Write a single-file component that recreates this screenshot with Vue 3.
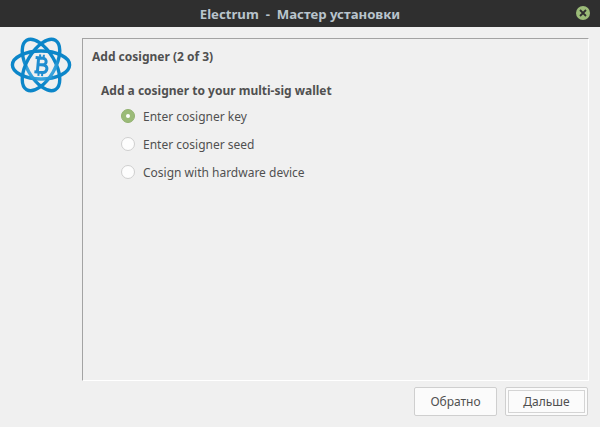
<script setup>
const options = [
  { label: 'Enter cosigner key', checked: true },
  { label: 'Enter cosigner seed', checked: false },
  { label: 'Cosign with hardware device', checked: false }
]
</script>

<template>
  <div class="window">
    <header class="titlebar">
      <span class="title">Electrum &nbsp;-&nbsp; Мастер установки</span>
      <span class="close">
        <svg width="8" height="8" viewBox="0 0 8 8">
          <path d="M1 1L7 7M7 1L1 7" stroke="#2f2f2f" stroke-width="1.8" />
        </svg>
      </span>
    </header>

    <div class="body">
      <div class="logo">
        <svg width="62" height="58" viewBox="0 0 62 58">
          <defs>
            <radialGradient id="ring" gradientUnits="userSpaceOnUse" cx="31" cy="38" r="15">
              <stop offset="0" stop-color="#4fb2e6" />
              <stop offset="1" stop-color="#0c86c9" />
            </radialGradient>
          </defs>
          <g fill="none" stroke="url(#ring)" stroke-width="3.4">
            <ellipse cx="31" cy="29" rx="28.6" ry="14" />
            <ellipse cx="31" cy="29" rx="28.6" ry="14" transform="rotate(60 31 29)" />
            <ellipse cx="31" cy="29" rx="28.6" ry="14" transform="rotate(-60 31 29)" />
          </g>
          <g transform="rotate(5 31 29)" fill="none" stroke="#1f8dd0">
            <path stroke-width="3" d="M25 22H32.5A3.3 3.3 0 0 1 32.5 28.7H28M28 28.7H33.5A3.7 3.7 0 0 1 33.5 36.2H25M28 22V36.2" />
            <path stroke-width="2" d="M29.3 18.5V21M33 18.5V21M29.3 37V40M33 37V40" />
          </g>
        </svg>
      </div>

      <div class="main">
        <section class="panel">
          <h1 class="step">Add cosigner (2 of 3)</h1>
          <h2 class="question">Add a cosigner to your multi-sig wallet</h2>
          <ul class="options">
            <li v-for="opt in options" :key="opt.label" class="option">
              <span class="radio" :class="{ on: opt.checked }"></span>
              {{ opt.label }}
            </li>
          </ul>
        </section>

        <footer class="actions">
          <button class="btn">Обратно</button>
          <button class="btn primary"><span>Дальше</span></button>
        </footer>
      </div>
    </div>
  </div>
</template>

<style>
html, body {
  margin: 0;
  background: #f0f0f0;
}
</style>

<style scoped>
.window {
  width: 600px;
  height: 427px;
  background: #f0f0f0;
  font-family: "Noto Sans", sans-serif;
  font-size: 12px;
  color: #505050;
  display: flex;
  flex-direction: column;
  overflow: hidden;
}

.titlebar {
  height: 27px;
  flex: none;
  background: #2f2f2f;
  display: flex;
  align-items: center;
  justify-content: center;
  position: relative;
}

.title {
  font-weight: 700;
  font-size: 13.2px;
  color: #b9c4cc;
}

.close {
  position: absolute;
  left: 576px;
  top: 6px;
  width: 14px;
  height: 14px;
  border-radius: 50%;
  background: #9bbb78;
  display: flex;
  align-items: center;
  justify-content: center;
}

.body {
  flex: 1;
  display: flex;
  min-height: 0;
}

.logo {
  width: 82px;
  flex: none;
  padding: 9px 0 0 10px;
  box-sizing: border-box;
}

.main {
  margin-top: 11px;
  width: 507px;
  display: flex;
  flex-direction: column;
}

.panel {
  height: 343px;
  box-sizing: border-box;
  border-top: 1px solid #a3a3a3;
  border-left: 1px solid #a3a3a3;
  border-right: 1px solid #fff;
  border-bottom: 1px solid #fff;
  padding: 9px 9px;
}

.step {
  margin: 0;
  font-size: 12px;
  line-height: 17px;
  font-weight: 700;
}

.question {
  margin: 17px 0 0 9px;
  font-size: 12px;
  line-height: 17px;
  font-weight: 700;
}

.options {
  list-style: none;
  margin: 3px 0 0 29px;
  padding: 0;
}

.option {
  height: 28px;
  display: flex;
  align-items: center;
  gap: 8px;
}

.radio {
  width: 14px;
  height: 14px;
  box-sizing: border-box;
  border-radius: 50%;
  background: #fdfdfd;
  border: 1px solid #cfcfcf;
  flex: none;
  position: relative;
}

.radio.on {
  background: #9bbb78;
  border-color: #92b26f;
}

.radio.on::after {
  content: "";
  position: absolute;
  left: 4px;
  top: 4px;
  width: 4px;
  height: 4px;
  border-radius: 50%;
  background: #fff;
}

.actions {
  display: flex;
  justify-content: flex-end;
  gap: 8px;
  padding: 6px 1px 0 0;
}

.btn {
  width: 83px;
  height: 29px;
  box-sizing: border-box;
  border: 1px solid #cfcfcf;
  border-radius: 2px;
  background: #fbfbfb;
  font-family: inherit;
  font-size: 12px;
  color: #505050;
  padding: 0;
}

.btn.primary {
  padding: 2px;
}

.btn.primary span {
  display: block;
  height: 100%;
  line-height: 21px;
  box-sizing: border-box;
  border: 1px solid #d4d4d4;
}
</style>
